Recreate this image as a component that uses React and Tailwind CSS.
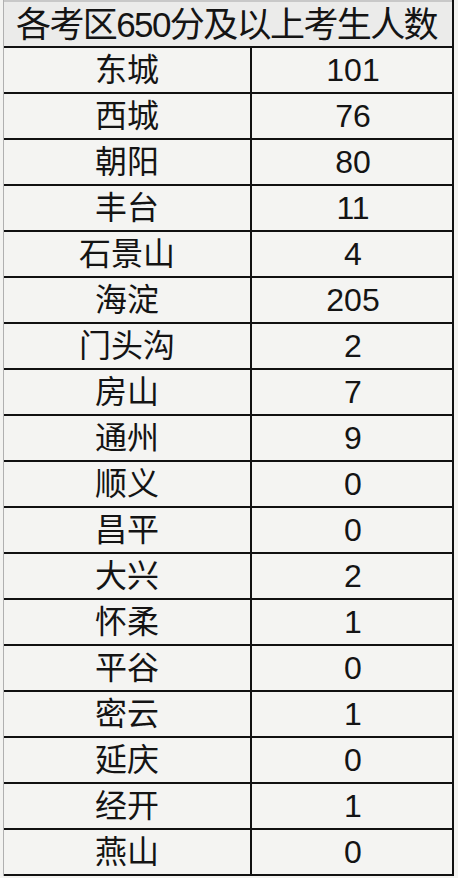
const ROWS = [
  ['东城', '101'],
  ['西城', '76'],
  ['朝阳', '80'],
  ['丰台', '11'],
  ['石景山', '4'],
  ['海淀', '205'],
  ['门头沟', '2'],
  ['房山', '7'],
  ['通州', '9'],
  ['顺义', '0'],
  ['昌平', '0'],
  ['大兴', '2'],
  ['怀柔', '1'],
  ['平谷', '0'],
  ['密云', '1'],
  ['延庆', '0'],
  ['经开', '1'],
  ['燕山', '0'],
];

export default function App() {
  return (
    <div className="w-[458px] h-[878px] bg-[#f3f3f1] font-['Liberation_Sans','Noto_Sans_CJK_SC',sans-serif] text-[#141414] overflow-hidden">
      <div className="ml-[3px] w-[451px] border-l border-[#b0b0b0] border-r-2 border-r-[#111]">
        {/* header */}
        <div className="h-[48px] box-border border-b-2 border-[#111] border-t-2 border-t-[#c8c8c8] bg-[#ebebea] flex items-center justify-center text-[35px] leading-none tracking-[-1.6px] pr-[3px]">
          各考区650分及以上考生人数
        </div>
        {ROWS.map(([name, n]) => (
          <div key={name} className="h-[46px] box-border border-b-2 border-[#111] flex bg-[#f4f4f2]">
            <div className="w-[248px] box-border border-r-2 border-[#111] flex items-center justify-center text-[32px] leading-none">
              {name}
            </div>
            <div className="flex-1 flex items-center justify-center text-[32px] leading-none pl-[2px]">
              {n}
            </div>
          </div>
        ))}
      </div>
    </div>
  );
}
